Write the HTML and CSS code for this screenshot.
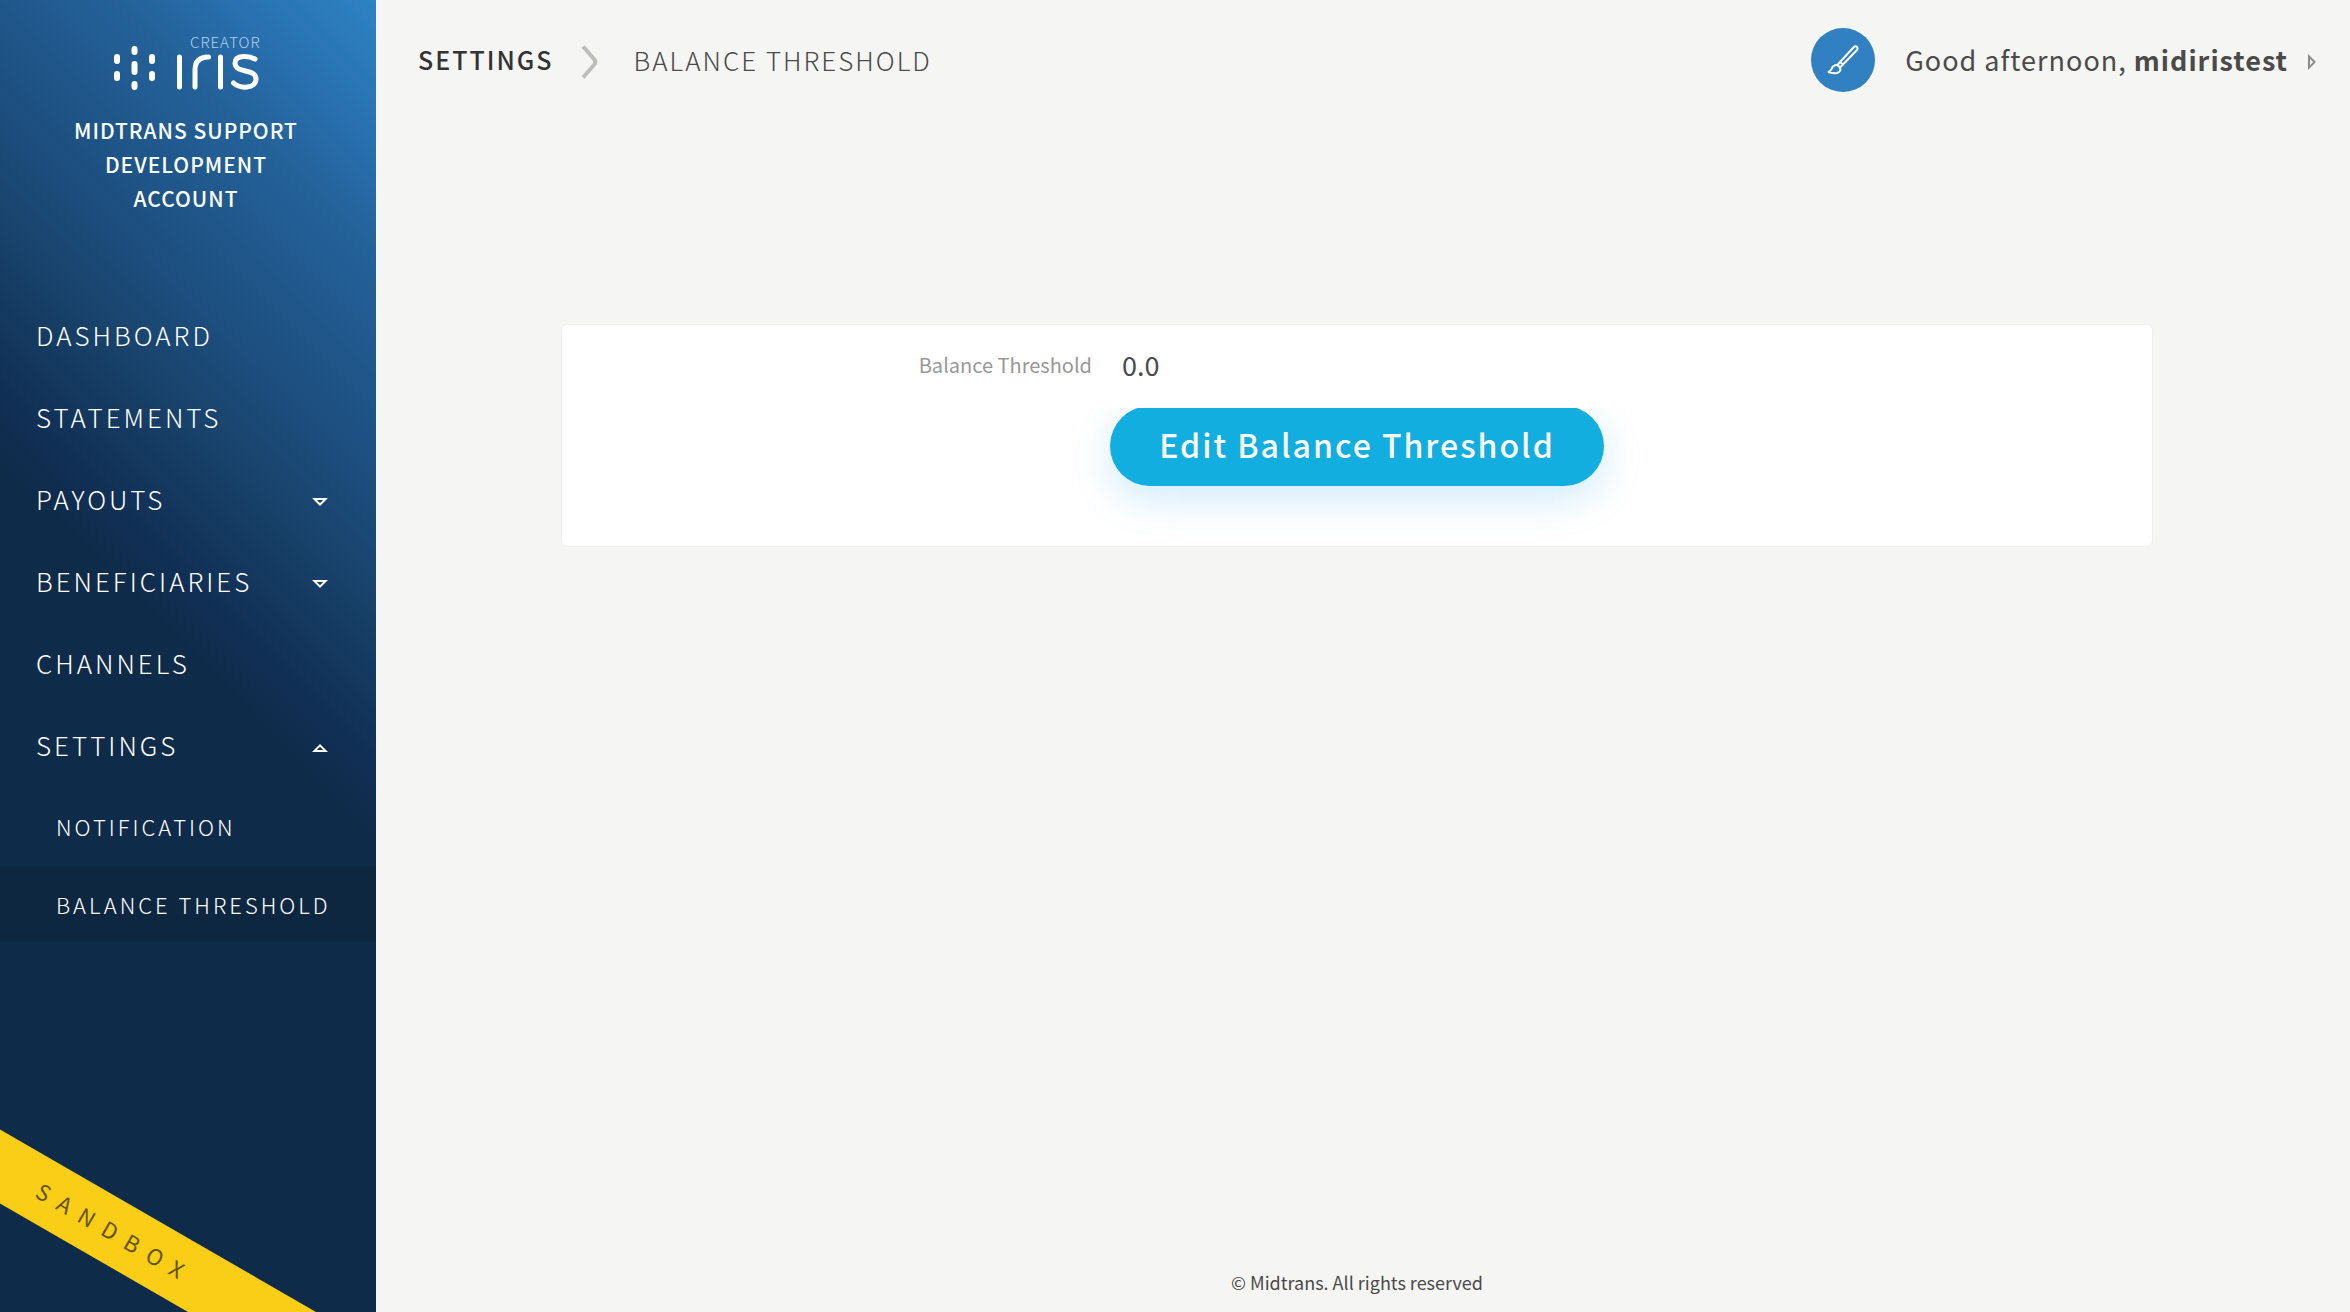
FILE: index.html
```html
<!DOCTYPE html>
<html lang="en">
<head>
<meta charset="utf-8">
<title>Balance Threshold</title>
<link rel="stylesheet" href="styles.css">
</head>
<body>
<div class="app">
  <aside class="sidebar">
    <a class="logo" href="#" aria-label="Creator Iris">
      <svg class="logo-art" width="150" height="60" viewBox="0 0 150 60" aria-hidden="true">
        <g fill="none" stroke="#fff" stroke-width="6" stroke-linecap="round">
          <path d="M4 27v4M4 44v4M21.500 19v3M21.500 34v8M21.500 54v3M39 27v4M39 44v4"/>
          <path stroke-width="5" d="M66.500 27v30M82 57V40Q82 27 95.500 27M107.500 27v30"/>
          <path stroke-width="5" d="M142 29C137 26 122 24 122 33C122 44 143 38 143 49C143 59 127 59 120.500 53"/>
        </g>
        <text class="logo-tag" x="77" y="18">CREATOR</text>
      </svg>
    </a>
    <h1 class="account">MIDTRANS SUPPORT DEVELOPMENT ACCOUNT</h1>
    <nav class="menu">
      <a class="menu-item" href="#">DASHBOARD</a>
      <a class="menu-item" href="#">STATEMENTS</a>
      <a class="menu-item" href="#">PAYOUTS
        <svg width="16" height="8" viewBox="0 0 16 8"><path fill="#fff" fill-rule="evenodd" d="M0 0h16L8 8zM4.800 2L8 5.200 11.200 2z"/></svg></a>
      <a class="menu-item" href="#">BENEFICIARIES
        <svg width="16" height="8" viewBox="0 0 16 8"><path fill="#fff" fill-rule="evenodd" d="M0 0h16L8 8zM4.800 2L8 5.200 11.200 2z"/></svg></a>
      <a class="menu-item" href="#">CHANNELS</a>
      <a class="menu-item" href="#">SETTINGS
        <svg width="16" height="8" viewBox="0 0 16 8"><path fill="#fff" fill-rule="evenodd" d="M0 8h16L8 0zM4.800 6L8 2.800 11.200 6z"/></svg></a>
      <div class="submenu">
        <a class="submenu-item" href="#">NOTIFICATION</a>
        <a class="submenu-item is-active" href="#">BALANCE THRESHOLD</a>
      </div>
    </nav>
    <div class="ribbon">SANDBOX</div>
  </aside>
  <div class="page">
    <header class="topbar">
      <nav class="crumbs">
        <a class="crumb" href="#">SETTINGS</a>
        <svg width="17" height="34" viewBox="0 0 17 34"><path d="M2 1.500L13 14Q15.500 17 13 20L2 32.500" fill="none" stroke="#bdbdb9" stroke-width="4"/></svg>
        <span class="crumb-current">BALANCE THRESHOLD</span>
      </nav>
      <button class="user" type="button">
        <span class="avatar">
          <svg width="32" height="32" viewBox="0 0 32 32" fill="none" stroke="#fff" stroke-width="2" stroke-linejoin="round"><path d="M13 18L26.500 3.500Q28.500 1.500 30 3Q31.500 4.500 29.500 6.500L16 20.500z"/><path d="M13 18l-2.500 3 2.500 2.500 3-3M10.500 21q-3.500-.5-5 2-1.500 4-4 5 5 2 8.500 1 4.500-1.500 3-5.500z"/></svg>
        </span>
        <span class="greeting">Good afternoon, <strong>midiristest</strong></span>
        <svg class="user-arrow" width="8" height="16" viewBox="0 0 8 16"><path fill="#8c8c8c" fill-rule="evenodd" d="M0 0l8 8-8 8zM2 4.800v6.400L5.200 8z"/></svg>
      </button>
    </header>
    <main class="content">
      <section class="card">
        <dl class="field">
          <dt>Balance Threshold</dt>
          <dd>0.0</dd>
        </dl>
        <div class="actions">
          <button class="edit" type="button">Edit Balance Threshold</button>
        </div>
      </section>
    </main>
    <footer class="footer">© Midtrans. All rights reserved</footer>
  </div>
</div>
</body>
</html>
```
FILE: styles.css
```css
* {
  box-sizing: border-box;
}

body {
  margin: 0;
  background: #f5f5f3;
  color: #4a4a4a;
  font-family: "Noto Sans CJK SC", "Noto Sans", sans-serif;
}

a {
  color: inherit;
  text-decoration: none;
}

button {
  border: 0;
  background: none;
  color: inherit;
  font: inherit;
  cursor: pointer;
}

.app {
  display: flex;
  min-height: 100vh;
}

/* Sidebar */
.sidebar {
  position: relative;
  flex: 0 0 376px;
  overflow: hidden;
  background: linear-gradient(45deg, #0f2b4a 50%, #113056 55%, #18426a 64%, #1d4f80 72%, #24629a 85%, #2972b2 92%, #2e82c2 100%);
  color: #fff;
}

.logo {
  display: flex;
  justify-content: center;
  padding-top: 30px;
}

.logo-tag {
  fill: #b5d0ea;
  font-size: 15px;
  font-weight: 300;
  letter-spacing: 1px;
}

.logo-art {
  overflow: visible;
}

.account {
  margin: 0;
  padding: 23px 62px 0 58px;
  font-size: 21px;
  font-weight: 500;
  line-height: 34px;
  letter-spacing: 1px;
  text-align: center;
}

.menu {
  display: flex;
  flex-direction: column;
  padding-top: 80px;
}

.menu-item {
  display: flex;
  align-items: center;
  justify-content: space-between;
  height: 82px;
  padding: 0 48px 4px 36px;
  font-size: 26px;
  font-weight: 300;
  letter-spacing: 3px;
}

.menu-item svg {
  margin-top: 8px;
}

.submenu {
  padding-top: 3px;
}

.submenu-item {
  display: flex;
  align-items: center;
  height: 76px;
  padding: 0 0 4px 56px;
  font-size: 22px;
  font-weight: 300;
  letter-spacing: 3px;
  white-space: nowrap;
}

.submenu-item.is-active {
  padding-bottom: 0;
  background: #0e2741;
}

.ribbon {
  position: absolute;
  left: -140px;
  bottom: 50px;
  width: 500px;
  height: 64px;
  padding-left: 12px;
  background: #facd16;
  color: #645306;
  font-size: 22px;
  line-height: 62px;
  letter-spacing: 11px;
  text-align: center;
  transform: rotate(30deg);
}

/* Page */
.page {
  display: flex;
  flex: 1;
  flex-direction: column;
  min-width: 0;
}

.topbar {
  display: flex;
  align-items: center;
  justify-content: space-between;
  height: 120px;
  padding: 0 34px 0 42px;
}

.crumbs {
  display: flex;
  align-items: center;
  padding-bottom: 2px;
  font-size: 26px;
  letter-spacing: 2px;
}

.crumbs svg {
  margin: 5px 36px 0 27px;
}

.crumb {
  color: #333;
  font-size: 25px;
  font-weight: 500;
}

.crumb-current {
  font-weight: 300;
}

.user {
  display: flex;
  align-items: center;
  padding: 0;
  font-size: 27px;
  letter-spacing: 1px;
}

.avatar {
  display: grid;
  place-items: center;
  width: 64px;
  height: 64px;
  margin-right: 30px;
  border-radius: 50%;
  background: #3080c2;
}

.greeting {
  margin-right: 20px;
  padding-bottom: 2px;
}

.user-arrow {
  margin-top: 4px;
}

.content {
  flex: 1;
  padding: 204px 197px 0 185px;
}

.card {
  height: 223px;
  border: 1px solid #efefed;
  border-radius: 6px;
  background: #fff;
}

.field {
  display: grid;
  grid-template-columns: 1fr 2fr;
  align-items: center;
  height: 83px;
  margin: 0;
  padding-bottom: 5px;
}

.field dt {
  color: #989898;
  font-size: 20px;
  text-align: right;
}

.field dd {
  margin: 0;
  padding-left: 30px;
  font-size: 27px;
}

.actions {
  display: flex;
  justify-content: center;
  height: 136px;
  overflow: hidden;
}

.edit {
  height: 80px;
  margin-top: -2px;
  padding: 0 49px 4px;
  border-radius: 40px;
  background: #11aedf;
  box-shadow: 0 12px 40px rgba(17, 150, 223, 0.2);
  color: #fff;
  font-size: 32px;
  font-weight: 500;
  letter-spacing: 2px;
}

.footer {
  padding: 0 12px 17px 0;
  font-size: 18px;
  text-align: center;
}
```
